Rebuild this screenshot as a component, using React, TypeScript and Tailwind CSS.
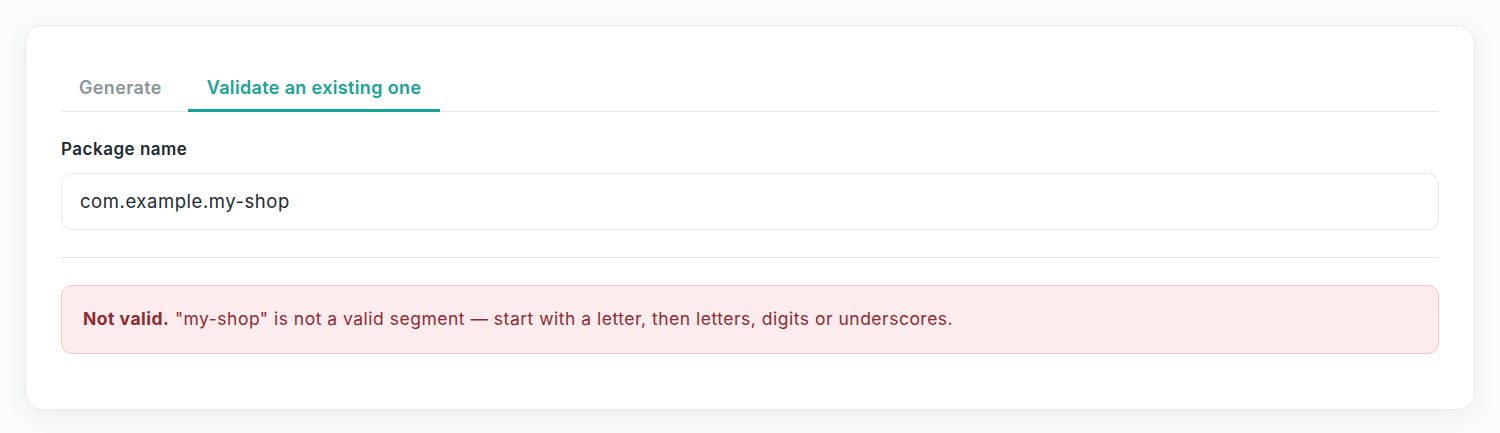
import { useState } from "react";

const tabs = [
    { id: "generate", label: "Generate" },
    { id: "validate", label: "Validate an existing one" }
];

export default function App() {
    const [active, setActive] = useState("validate");
    const [value, setValue] = useState("com.example.my-shop");

    return (
        <div
            className="min-h-[433px] bg-[#fafbfb] px-[25px] pt-[25px] pb-[25px]"
            style={{ fontFamily: "Inter, 'Noto Sans', sans-serif" }}
        >
            <div className="rounded-[18px] border border-[#e9ecec] bg-white px-[35px] pt-[35px] pb-[55px] shadow-[0_6px_24px_rgba(20,40,40,0.06)]">
                {/* Tabs */}
                <div className="flex gap-2 border-b border-[#e6e9ea]">
                    {tabs.map(({ id, label }) => {
                        const on = active === id;
                        return (
                            <button
                                key={id}
                                onClick={() => setActive(id)}
                                className={
                                    on
                                        ? "h-[51px] px-[19px] pt-[4px] -mb-px border-b-[3px] border-[#17a398] text-[18px] tracking-[0.35px] font-semibold text-[#17a398]"
                                        : "h-[51px] px-[18px] pt-[4px] -mb-px border-b-[3px] border-transparent text-[18px] tracking-[0.35px] font-semibold text-[#8a9599]"
                                }
                            >
                                {label}
                            </button>
                        );
                    })}
                </div>

                {/* Field */}
                <label className="mt-[25px] block text-[17px] tracking-[0.5px] font-semibold text-[#1c2b31]">
                    Package name
                </label>
                <input
                    value={value}
                    onChange={(e) => setValue(e.target.value)}
                    className="mt-[10px] block h-[57px] w-full rounded-[11px] border border-[#e6e9ea] px-[18px] text-[18.5px] tracking-[0.55px] text-[#1c2b31] outline-none"
                />

                <div className="mt-[27px] border-t border-[#e6e9ea]" />

                {/* Result */}
                <div className="mt-[27px] flex h-[69px] items-center rounded-[11px] border border-[#f2c8cb] bg-[#fdecee] px-[21px] text-[17.5px] tracking-[0.5px] text-[#8f2a30]">
                    <p>
                        <strong className="font-bold">Not valid.</strong> "my-shop" is not a valid segment — start with a letter, then letters, digits or underscores.
                    </p>
                </div>
            </div>
        </div>
    );
}
